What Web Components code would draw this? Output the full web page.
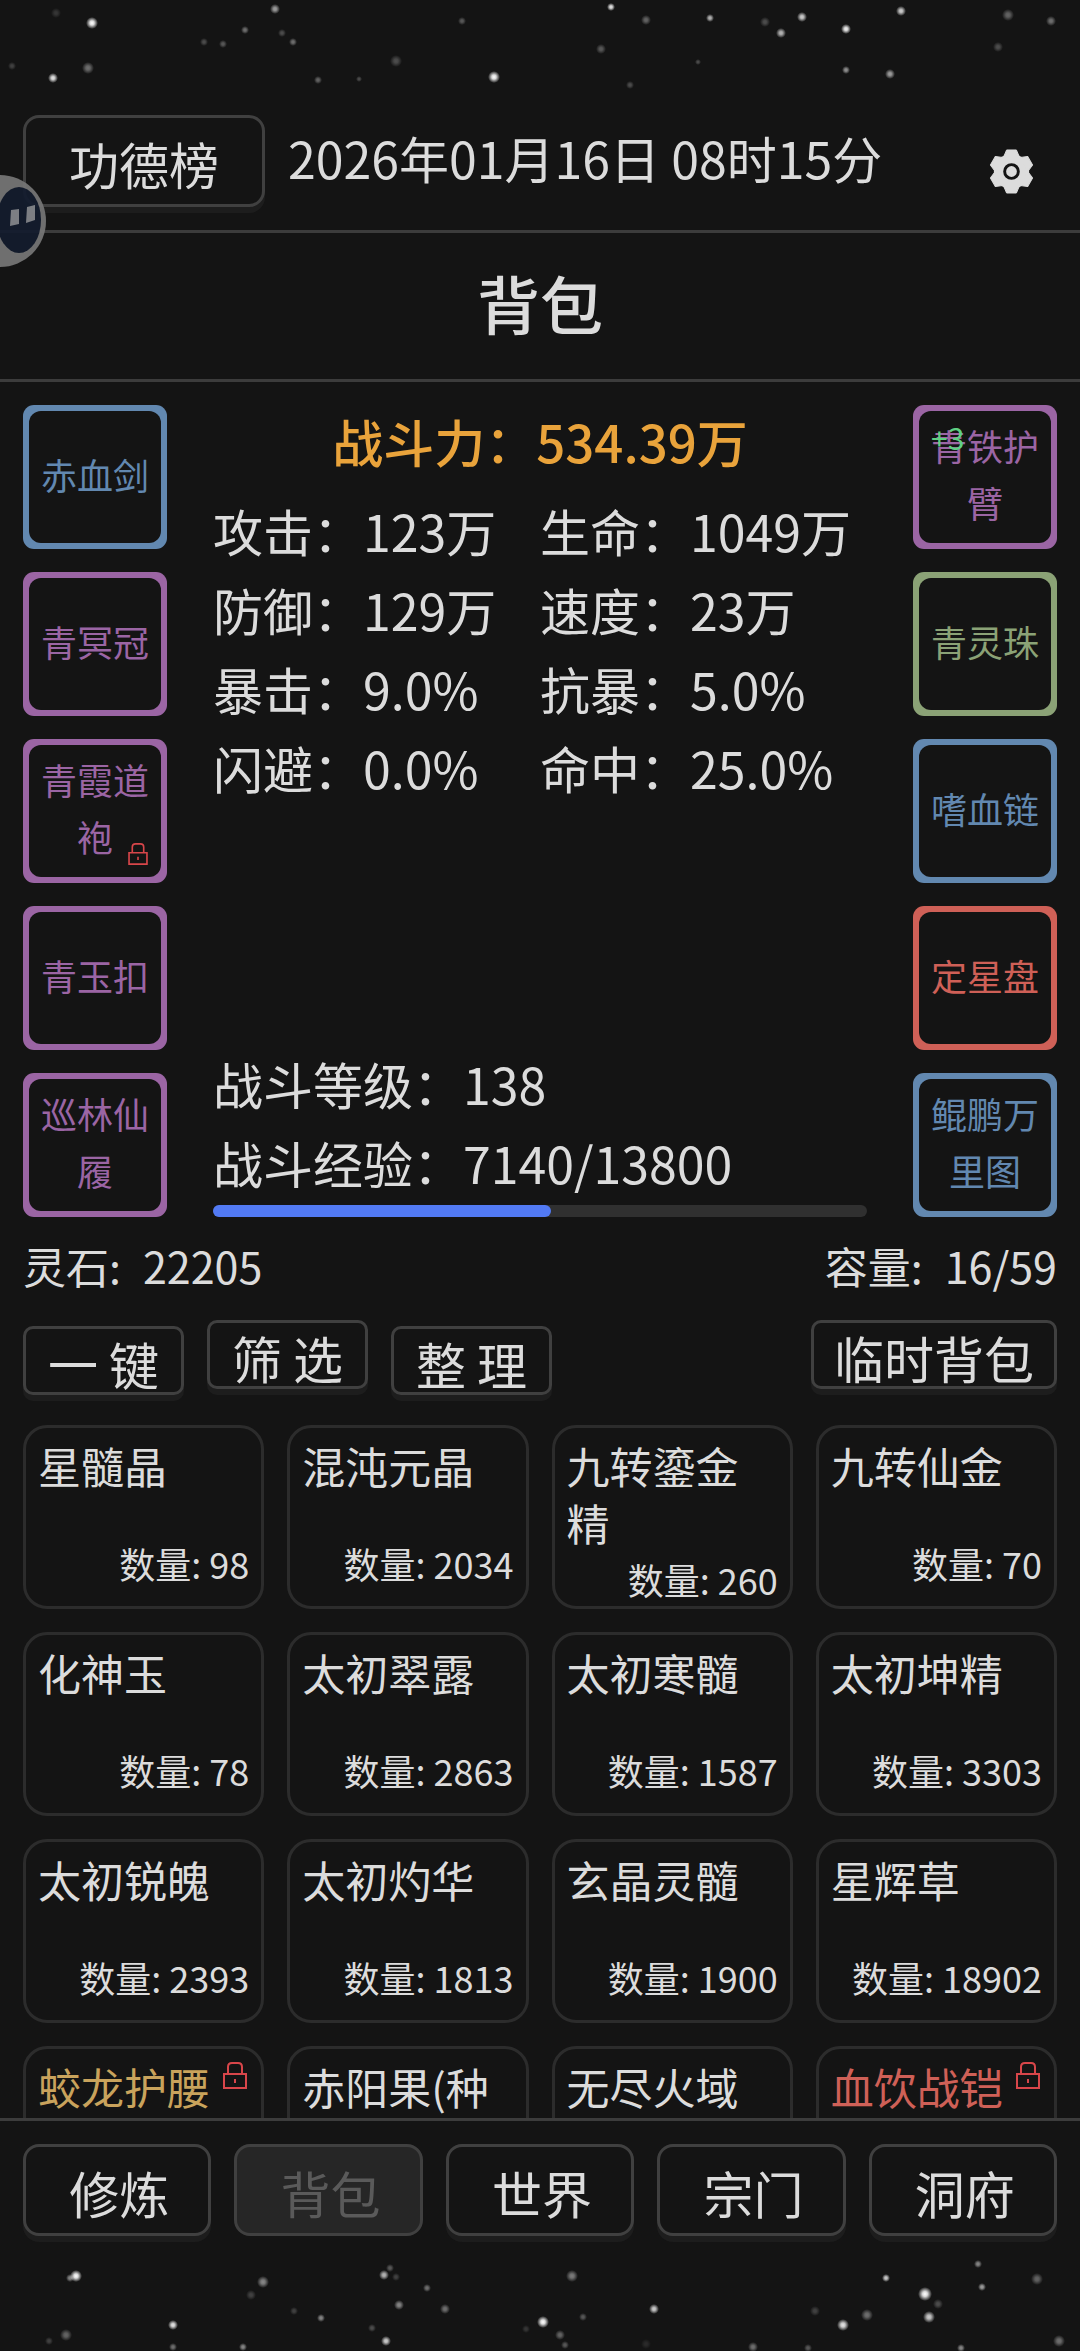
<!DOCTYPE html>
<html lang="zh-CN">
<head>
<meta charset="utf-8">
<meta name="viewport" content="width=device-width, initial-scale=1">
<title>背包</title>
<style>
    body {
        margin: 0;
        background: #141414;
        color: #dcdcdc;
        font-family: "Noto Sans CJK SC", sans-serif;
    }
</style>
</head>
<body>
<x-game-app></x-game-app>

<script>
const COLORS = {
    blue: '#6288b0',
    purple: '#9b65a4',
    green: '#8ba276',
    red: '#cf6057',
    gold: '#c9a35c',
};

const lockIcon = `
<svg class="lock" viewBox="0 0 24 27" fill="none" stroke="#d8464a" stroke-width="2" aria-hidden="true">
    <path d="M5 12V5q0-4 4-4h6q4 0 4 4v7M1 12h22v14H1z"/>
    <path d="M12 17v4"/>
</svg>
`;

// stars: x, y, radius, opacity
const TOP_STARS = [
    [92, 23, 6, 1], [275, 9, 5, .6], [245, 30, 4, .4], [282, 33, 4, .25], [204, 42, 4, .25],
    [223, 44, 4, .3], [293, 42, 4, .4], [53, 78, 5, .9], [88, 68, 6, .4], [396, 61, 6, .25],
    [318, 80, 4, .35], [359, 79, 3, .25], [462, 21, 4, .3], [494, 77, 6, 1], [611, 7, 4, .9],
    [646, 20, 5, .35], [601, 49, 5, .3], [630, 85, 4, .25], [710, 18, 4, .7], [765, 22, 5, .25],
    [802, 17, 5, .8], [781, 33, 5, .7], [846, 29, 5, .95], [901, 11, 5, .8], [1008, 15, 6, .35],
    [1051, 21, 5, .4], [998, 47, 5, .25], [846, 70, 4, .55], [890, 74, 5, .6], [698, 62, 3, .25],
    [56, 13, 5, .15], [12, 66, 4, .2],
];
const BOTTOM_STARS = [
    [76, 17, 6, 1], [70, 19, 4, .5], [263, 23, 6, .5], [251, 36, 5, .2], [384, 16, 5, .7],
    [390, 9, 4, .3], [396, 18, 4, .2], [427, 29, 4, .4], [399, 46, 5, .5], [445, 50, 5, .4],
    [294, 52, 4, .2], [321, 59, 4, .5], [173, 66, 5, .9], [66, 76, 6, .35], [49, 82, 4, .2],
    [173, 88, 4, .4], [243, 88, 4, .5], [386, 82, 5, .8], [372, 69, 4, .25], [526, 70, 4, .15],
    [572, 17, 6, .45], [654, 50, 5, .8], [543, 63, 6, 1], [583, 58, 4, .3], [560, 76, 5, .35],
    [565, 86, 4, .3], [753, 88, 5, .4], [808, 89, 4, .3], [646, 85, 5, .1], [815, 52, 5, .2],
    [843, 66, 6, .9], [867, 56, 6, .4], [886, 19, 4, .8], [925, 35, 7, 1], [938, 45, 5, .25],
    [929, 58, 6, .8], [978, 5, 4, .5], [982, 28, 4, .6], [1037, 20, 6, .35], [1059, 82, 6, .4],
    [961, 89, 4, .5],
];

class StarField extends HTMLElement {
    constructor() {
        super();
        this.attachShadow({mode: 'open'});
        const stars = this.getAttribute('side') === 'bottom' ? BOTTOM_STARS : TOP_STARS;
        this.shadowRoot.innerHTML = `
<style>
    :host {
        display: block;
        height: 92px;
        flex: none;
    }
    svg {
        display: block;
        width: 100%;
        height: 100%;
    }
</style>
<svg viewBox="0 0 1080 92" preserveAspectRatio="xMidYMid slice" aria-hidden="true">
    <radialGradient id="glow">
        <stop offset="0" stop-color="#fff"/>
        <stop offset=".35" stop-color="#fff" stop-opacity=".85"/>
        <stop offset="1" stop-color="#fff" stop-opacity="0"/>
    </radialGradient>
    ${stars.map(([x, y, r, o]) => `<circle cx="${x}" cy="${y}" r="${r}" opacity="${o}" fill="url(#glow)"/>`).join('')}
</svg>
`;
    }
}

class GameButton extends HTMLElement {
    constructor() {
        super();
        this.attachShadow({mode: 'open'});
        this.shadowRoot.innerHTML = `
<style>
    :host {
        display: block;
    }
    button {
        box-sizing: border-box;
        width: 100%;
        padding: 20px 43px 15px;
        border: 3px solid #404040;
        border-radius: 16px;
        background: #141414;
        box-shadow: 0 6px 0 #1d1d1d;
        color: inherit;
        font-family: inherit;
        font-size: 50px;
        line-height: 51px;
        white-space: nowrap;
    }
    :host([size="small"]) button {
        padding: 9px 20px 3px;
        border-radius: 10px;
    }
    :host([pair]) button {
        min-width: 161px;
    }
    :host([size="nav"]) button {
        padding: 20px 0 15px 4px;
    }
    button:disabled {
        background: #262626;
        box-shadow: none;
        color: #5a5a5a;
    }
</style>
<button type="button"${this.hasAttribute('disabled') ? ' disabled' : ''}><slot></slot></button>
`;
    }
}

class TopBar extends HTMLElement {
    constructor() {
        super();
        this.attachShadow({mode: 'open'});
        this.shadowRoot.innerHTML = `
<style>
    :host {
        display: flex;
        gap: 23px;
        padding: 23px;
        border-bottom: 3px solid #3c3c3c;
        position: relative;
    }
    time {
        flex: 1;
        font-size: 50px;
        line-height: 84px;
        white-space: nowrap;
    }
    .settings {
        align-self: center;
        padding: 20px 23px 0;
        border: 0;
        background: none;
    }
    .settings svg {
        display: block;
        width: 45px;
        height: 45px;
    }
    .pet {
        position: absolute;
        left: 0;
        top: 83px;
        width: 48px;
        height: 92px;
        z-index: 1;
        opacity: .92;
    }
</style>
<x-button>功德榜</x-button>
<time datetime="2026-01-16T08:15">2026年01月16日 08时15分</time>
<button type="button" class="settings" aria-label="设置">
    <svg viewBox="-23 -23 46 46">
        <g fill="#dcdcdc">
            <circle r="18"/>
            <g id="teeth"></g>
        </g>
        <circle r="7" fill="none" stroke="#141414" stroke-width="3"/>
    </svg>
</button>
<svg class="pet" viewBox="0 0 48 92" aria-hidden="true">
    <circle cx="0" cy="46" r="46" fill="#777"/>
    <ellipse cx="19" cy="45" rx="22" ry="33" fill="#131c2e"/>
    <path fill="#85888d" d="M11 35l8-1v15l-9 2zM27 32l8-2v15l-9 3z"/>
</svg>
`;
        this.shadowRoot.querySelector('#teeth').innerHTML = [0, 60, 120, 180, 240, 300]
            .map(a => `<path transform="rotate(${a})" d="M-8-15l3-7h10l3 7z" stroke="#dcdcdc" stroke-width="1" stroke-linejoin="round"/>`)
            .join('');
    }
}

class EquipSlot extends HTMLElement {
    constructor() {
        super();
        this.attachShadow({mode: 'open'});
        const plus = this.getAttribute('plus');
        this.shadowRoot.innerHTML = `
<style>
    :host {
        display: block;
        position: relative;
        color: ${COLORS[this.getAttribute('color')]};
    }
    button {
        display: block;
        width: 144px;
        height: 144px;
        padding: 6px;
        border: 0;
        border-radius: 11px;
        background: currentColor;
        color: inherit;
        font-family: inherit;
        font-size: 36px;
        line-height: 57px;
    }
    .name {
        display: flex;
        box-sizing: border-box;
        align-items: center;
        justify-content: center;
        height: 100%;
        padding-bottom: 6px;
        border-radius: 12px;
        background: #141414;
    }
    .plus {
        position: absolute;
        left: 18px;
        top: 12px;
        color: #5fd083;
        font-size: 30px;
        line-height: 40px;
    }
    .lock {
        position: absolute;
        right: 19px;
        bottom: 18px;
        width: 20px;
        height: 22px;
    }
</style>
<button type="button"><span class="name"><slot></slot></span></button>
${plus ? `<span class="plus">${plus}</span>` : ''}
${this.hasAttribute('locked') ? lockIcon : ''}
`;
    }
}

class BattleStats extends HTMLElement {
    constructor() {
        super();
        this.attachShadow({mode: 'open'});
        this.shadowRoot.innerHTML = `
<style>
    :host {
        display: flex;
        flex-direction: column;
        flex: 1;
        margin: 0 23px;
        font-size: 50px;
        line-height: 79px;
        white-space: nowrap;
    }
    .power {
        margin-bottom: 13px;
        color: #e9a33b;
        font-size: 51px;
        font-weight: 500;
        line-height: 73px;
        text-align: center;
    }
    dl {
        display: grid;
        grid-template-columns: 1fr 1fr;
        margin: 0;
    }
    dl.level {
        display: block;
        margin-top: auto;
        padding-bottom: 3px;
    }
    dl div {
        display: flex;
    }
    dd {
        margin: 0;
    }
    progress {
        display: block;
        width: 100%;
        height: 12px;
        border: 0;
        appearance: none;
        background: none;
    }
    progress::-webkit-progress-bar {
        border-radius: 6px;
        background: #303030;
    }
    progress::-webkit-progress-value {
        border-radius: 6px;
        background: #527af4;
    }
</style>
<div class="power">战斗力：534.39万</div>
<dl>
    <div><dt>攻击：</dt><dd>123万</dd></div>
    <div><dt>生命：</dt><dd>1049万</dd></div>
    <div><dt>防御：</dt><dd>129万</dd></div>
    <div><dt>速度：</dt><dd>23万</dd></div>
    <div><dt>暴击：</dt><dd>9.0%</dd></div>
    <div><dt>抗暴：</dt><dd>5.0%</dd></div>
    <div><dt>闪避：</dt><dd>0.0%</dd></div>
    <div><dt>命中：</dt><dd>25.0%</dd></div>
</dl>
<dl class="level">
    <div><dt>战斗等级：</dt><dd>138</dd></div>
    <div><dt>战斗经验：</dt><dd>7140/13800</dd></div>
</dl>
<progress value="7140" max="13800" aria-label="战斗经验"></progress>
`;
    }
}

class BagItem extends HTMLElement {
    constructor() {
        super();
        this.attachShadow({mode: 'open'});
        const count = this.getAttribute('count');
        const color = COLORS[this.getAttribute('color')];
        this.shadowRoot.innerHTML = `
<style>
    :host {
        display: block;
        box-sizing: border-box;
        position: relative;
        padding: 9px 12px;
        border: 3px solid #2c2c2c;
        border-radius: 24px;
        line-height: 57px;
    }
    .name {
        min-height: 98px;
        color: ${color || 'inherit'};
        font-size: 43px;
    }
    .count {
        font-size: 36px;
        text-align: right;
        white-space: nowrap;
    }
    .lock {
        position: absolute;
        right: 14px;
        top: 13px;
        width: 24px;
        height: 27px;
    }
</style>
<div class="name"><slot></slot></div>
${count ? `<div class="count">数量: ${count}</div>` : ''}
${this.hasAttribute('locked') ? lockIcon : ''}
`;
    }
}

class BagPage extends HTMLElement {
    constructor() {
        super();
        this.attachShadow({mode: 'open'});
        this.shadowRoot.innerHTML = `
<style>
    :host {
        display: flex;
        flex-direction: column;
        flex: 1;
        min-height: 0;
        overflow: hidden;
    }
    h1 {
        margin: 0;
        padding-bottom: 8px;
        border-bottom: 3px solid #3c3c3c;
        font-size: 63px;
        font-weight: 500;
        line-height: 138px;
        text-align: center;
    }
    .equip {
        display: flex;
        gap: 23px;
        padding: 23px 23px 0;
    }
    .slots {
        display: flex;
        flex-direction: column;
        gap: 23px;
    }
    .resources {
        display: flex;
        justify-content: space-between;
        padding: 20px 23px 26px;
        font-size: 43px;
        line-height: 57px;
    }
    .resources span {
        display: flex;
        gap: 22px;
    }
    .tools {
        display: flex;
        align-items: flex-start;
        gap: 23px;
        min-height: 75px;
        padding: 0 23px;
    }
    .low {
        align-self: flex-end;
    }
    .end {
        margin-left: auto;
    }
    .items {
        display: grid;
        grid-template-columns: repeat(4, 1fr);
        grid-auto-rows: 184px;
        gap: 23px;
        margin-top: 30px;
        padding: 0 23px;
    }
</style>
<h1>背包</h1>
<section class="equip">
    <div class="slots">
        <x-equip-slot color="blue">赤血剑</x-equip-slot>
        <x-equip-slot color="purple">青冥冠</x-equip-slot>
        <x-equip-slot color="purple" locked>青霞道袍</x-equip-slot>
        <x-equip-slot color="purple">青玉扣</x-equip-slot>
        <x-equip-slot color="purple">巡林仙履</x-equip-slot>
    </div>
    <x-battle-stats></x-battle-stats>
    <div class="slots">
        <x-equip-slot color="purple" plus="+3">青铁护臂</x-equip-slot>
        <x-equip-slot color="green">青灵珠</x-equip-slot>
        <x-equip-slot color="blue">嗜血链</x-equip-slot>
        <x-equip-slot color="red">定星盘</x-equip-slot>
        <x-equip-slot color="blue">鲲鹏万里图</x-equip-slot>
    </div>
</section>
<div class="resources">
    <span><span>灵石:</span><span>22205</span></span>
    <span><span>容量:</span><span>16/59</span></span>
</div>
<div class="tools">
    <x-button class="low" size="small" pair>一 键</x-button>
    <x-button size="small" pair>筛 选</x-button>
    <x-button class="low" size="small" pair>整 理</x-button>
    <x-button class="end" size="small">临时背包</x-button>
</div>
<section class="items">
    <x-bag-item count="98">星髓晶</x-bag-item>
    <x-bag-item count="2034">混沌元晶</x-bag-item>
    <x-bag-item count="260">九转鎏金精</x-bag-item>
    <x-bag-item count="70">九转仙金</x-bag-item>
    <x-bag-item count="78">化神玉</x-bag-item>
    <x-bag-item count="2863">太初翠露</x-bag-item>
    <x-bag-item count="1587">太初寒髓</x-bag-item>
    <x-bag-item count="3303">太初坤精</x-bag-item>
    <x-bag-item count="2393">太初锐魄</x-bag-item>
    <x-bag-item count="1813">太初灼华</x-bag-item>
    <x-bag-item count="1900">玄晶灵髓</x-bag-item>
    <x-bag-item count="18902">星辉草</x-bag-item>
    <x-bag-item color="gold" locked>蛟龙护腰</x-bag-item>
    <x-bag-item>赤阳果(种</x-bag-item>
    <x-bag-item>无尽火域</x-bag-item>
    <x-bag-item color="red" locked>血饮战铠</x-bag-item>
</section>
`;
    }
}

class BottomNav extends HTMLElement {
    constructor() {
        super();
        this.attachShadow({mode: 'open'});
        this.shadowRoot.innerHTML = `
<style>
    :host {
        display: block;
        border-top: 3px solid #3c3c3c;
    }
    nav {
        display: grid;
        grid-template-columns: repeat(5, 1fr);
        gap: 23px;
        padding: 23px;
    }
</style>
<nav>
    <x-button size="nav">修炼</x-button>
    <x-button size="nav" disabled>背包</x-button>
    <x-button size="nav">世界</x-button>
    <x-button size="nav">宗门</x-button>
    <x-button size="nav">洞府</x-button>
</nav>
`;
    }
}

class GameApp extends HTMLElement {
    constructor() {
        super();
        this.attachShadow({mode: 'open'});
        this.shadowRoot.innerHTML = `
<style>
    :host {
        display: flex;
        flex-direction: column;
        height: 100vh;
        overflow: hidden;
    }
</style>
<x-star-field></x-star-field>
<x-top-bar></x-top-bar>
<x-bag-page></x-bag-page>
<x-bottom-nav></x-bottom-nav>
<x-star-field side="bottom"></x-star-field>
`;
    }
}

window.customElements.define('x-star-field', StarField);
window.customElements.define('x-button', GameButton);
window.customElements.define('x-top-bar', TopBar);
window.customElements.define('x-equip-slot', EquipSlot);
window.customElements.define('x-battle-stats', BattleStats);
window.customElements.define('x-bag-item', BagItem);
window.customElements.define('x-bag-page', BagPage);
window.customElements.define('x-bottom-nav', BottomNav);
window.customElements.define('x-game-app', GameApp);
</script>
</body>
</html>
